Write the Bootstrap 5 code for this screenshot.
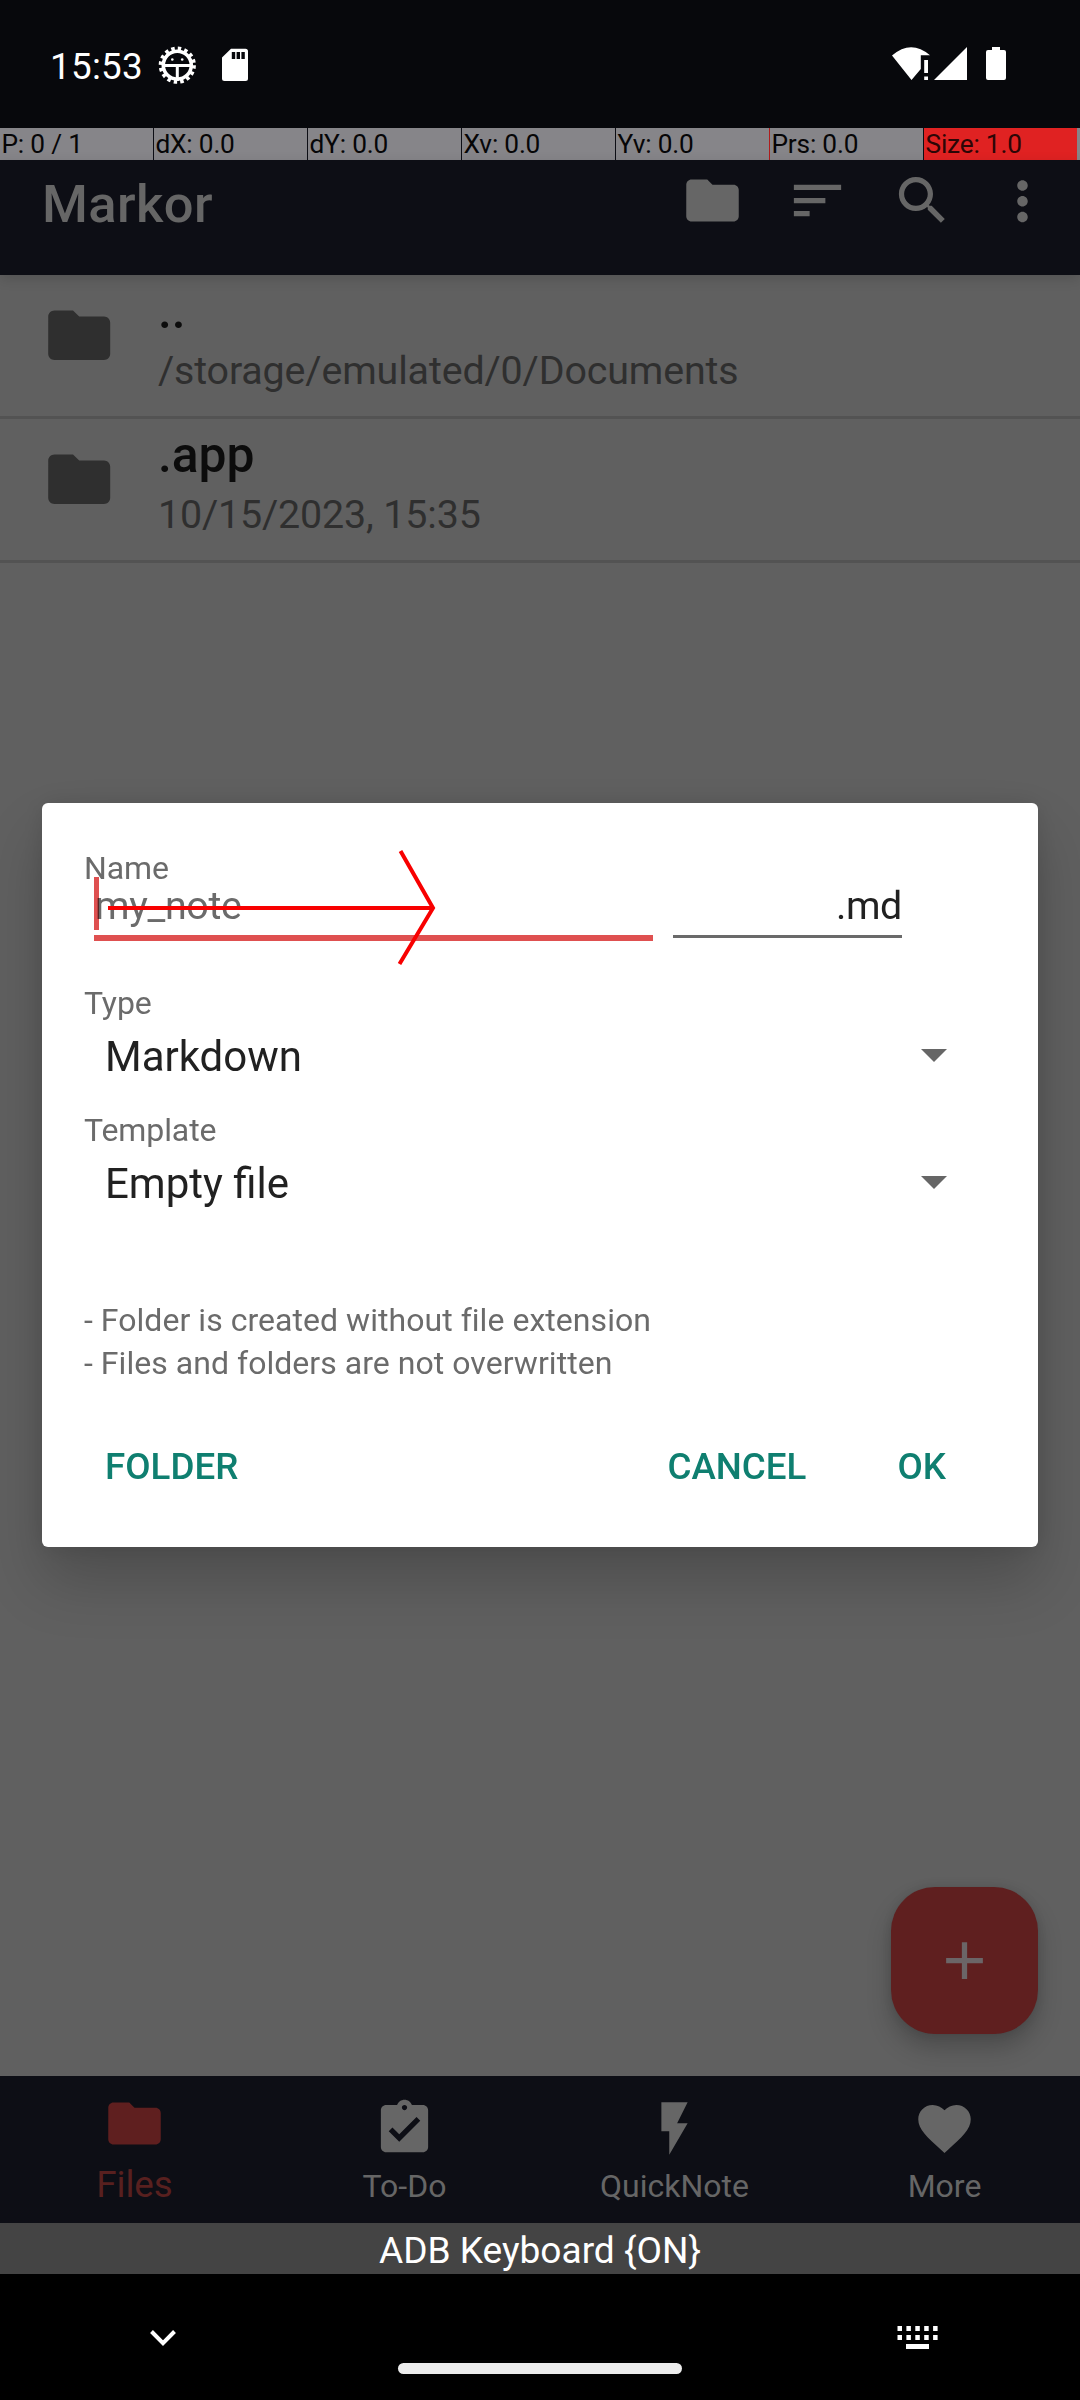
<!DOCTYPE html>
<html lang="en">
<head>
<meta charset="utf-8">
<meta name="viewport" content="width=device-width, initial-scale=1">
<title>Markor</title>
<link href="https://cdn.jsdelivr.net/npm/bootstrap@5.3.0/dist/css/bootstrap.min.css" rel="stylesheet">
<style>
  body { font-family: Roboto, "Liberation Sans", sans-serif; background: #000; }
  svg { display: block; flex: none; }
  .screen { width: 1080px; height: 2400px; overflow: hidden; }
  .statusbar { height: 128px; background: #07080c; padding: 5px 72px 0 50px; }
  .statusbar svg { margin-top: -1px; }
  .clock { font-size: 36.75px; letter-spacing: .3px; width: 107px; }
  .pointer-bar { height: 32px; background: #868589; font-size: 26.25px; letter-spacing: -.2px; line-height: 32px; color: #060607; }
  .pointer-bar div { width: 154px; padding-left: 1.5px; border-right: 1px solid #0d0e15; white-space: nowrap; }
  .pointer-bar .red-edge { border-right-color: #b01c1c; }
  .pointer-bar .hot { width: 153px; background: #e02222; color: #2c0606; border-right: 0; }
  .appbar { height: 115px; background: #0d0e15; color: #666; padding: 0 26px 0 42px; z-index: 1; box-shadow: 0 4px 12px rgba(0,0,0,.14); }
  .appbar-title { font-size: 52.5px; letter-spacing: .4px; line-height: 88px; font-weight: 500; }
  .appbar-icons { padding-top: 9px; gap: 42px; }
  .more-icon { margin-left: -5px; }
  .files { background: #606060; height: 1801px; }
  .file-row { height: 144px; border-bottom: 3px solid #535353; padding-left: 41.5px; }
  .file-icon { margin: 22.6px 42px 0 0; color: #2f2f2f; }
  .file-name { font-size: 49.8px; line-height: 73px; font-weight: 500; color: #0c0c0c; }
  .file-info { font-size: 39.4px; letter-spacing: -.14px; line-height: 46px; color: #2f2f2f; }
  .fab { right: 42px; bottom: 42px; width: 147px; height: 147px; border-radius: 44px; background: #5f1f1f; box-shadow: 0 14px 24px rgba(0,0,0,.22), 0 0 10px rgba(0,0,0,.1); }
  .tabs { height: 147px; background: #0d0e15; color: #666; }
  .tab { width: 270px; font-size: 32px; line-height: 40px; padding: 21px 1px 0 0; }
  .tab-label { margin-top: 6px; }
  .tab.chosen { color: #5f1f1f; font-size: 36.75px; padding-top: 16px; }
  .tab.chosen .tab-label { margin-top: 10px; color: #58201f; }
  .ime { height: 51px; background: #444; color: #fff; font-size: 37.1px; line-height: 55px; }
  .sysnav { height: 126px; background: #000; padding: 50px 141px 0 148px; }
  .handle { width: 284px; height: 11px; border-radius: 6px; background: #ececec; margin: 39px 0 0 4px; }
  .note-dialog { left: 42px; top: 803px; width: 996px; height: 744px; border-radius: 6px; background: #fff; padding: 48px 42px 0 42px; z-index: 2; box-shadow: 0 34px 60px rgba(0,0,0,.2), 0 0 24px rgba(0,0,0,.1); }
  .field-label { font-size: 32px; letter-spacing: -.1px; line-height: 34px; color: #6b6b6b; }
  .inputs { gap: 20px; padding-left: 10px; height: 56px; }
  .input-line { font-size: 39.4px; letter-spacing: -.35px; line-height: 40px; padding: 1px 0 9px; }
  .input-name { width: 559px; border-bottom: 6px solid #df5050; color: #6b6b6b; padding-left: 1px; }
  .input-ext { width: 229px; border-bottom: 3px solid #6a6a6a; color: #212121; }
  .pick { font-size: 42px; line-height: 54px; color: #212121; margin-top: 10px; padding: 0 49px 0 21px; }
  .pick svg { margin-top: 19px; }
  .gap-type { margin-top: 45px; }
  .gap-template { margin-top: 29px; }
  .hints { font-size: 32px; letter-spacing: .04px; line-height: 43px; color: #6b6b6b; margin-top: 88px; }
  .actions { margin-top: 52px; padding: 0 50px 0 21px; font-size: 36.75px; line-height: 60px; font-weight: 500; color: #0f7f70; }
  .cancel { margin-right: 91px; }
  .caret { left: 52px; top: 74px; width: 5px; height: 53px; background: #df5050; mix-blend-mode: multiply; }
  .gesture { left: 60px; top: 40px; }
</style>
</head>
<body>
<svg width="0" height="0" class="position-absolute">
  <symbol id="folder" viewBox="0 0 24 24"><path fill="currentColor" d="M10 4H4c-1.100 0-1.990.9-1.990 2L2 18c0 1.100.9 2 2 2h16c1.100 0 2-.9 2-2V8c0-1.100-.9-2-2-2h-8l-2-2z"/></symbol>
</svg>
<main class="screen position-relative d-flex flex-column">
  <header class="statusbar d-flex align-items-center text-white">
    <div class="clock">15:53</div>
    <svg width="40" height="40" viewBox="157 46 40 40">
      <circle cx="177.300" cy="65.200" r="16.600" fill="none" stroke="#fff" stroke-width="4" stroke-dasharray="3.400 3.119"/>
      <circle cx="177.300" cy="65.200" r="14" fill="none" stroke="#fff" stroke-width="3.600"/>
      <path d="M164 65.500h27M177.300 66v15" stroke="#fff" stroke-width="3"/>
      <circle cx="172.300" cy="59.500" r="1.300" fill="#fff"/><circle cx="182.200" cy="59.500" r="1.300" fill="#fff"/>
    </svg>
    <svg class="ms-4" width="30" height="40" viewBox="221 46 30 40">
      <path fill="#fff" fill-rule="evenodd" d="M231 48.700h14.500q2.500 0 2.500 2.500v27.300q0 2.500-2.500 2.500h-21q-2.500 0-2.500-2.500V57.500zM231.800 52v7h3.400v-7zM236.600 52v7h3.400v-7zM241.400 52v7h3.400v-7z"/>
    </svg>
    <svg class="ms-auto" width="118" height="40" viewBox="890 46 118 40">
      <path fill="#fff" d="M892 55.500Q911 39 930 55.200h-9.200V69L911.500 80z"/>
      <path fill="#fff" d="M924.200 60h3.800v13h-3.800zM924.200 76.500h3.800V80h-3.800z"/>
      <path fill="#fff" d="M934 80 967 47v33z"/>
      <path fill="#fff" d="M992 47h8v3h4q2 0 2 2v26q0 2-2 2h-16q-2 0-2-2V52q0-2 2-2h4z"/>
    </svg>
  </header>
  <div class="pointer-bar d-flex">
    <div>P: 0 / 1</div><div>dX: 0.0</div><div>dY: 0.0</div><div>Xv: 0.0</div><div class="red-edge">Yv: 0.0</div><div>Prs: 0.0</div><div class="hot">Size: 1.0</div>
  </div>
  <nav class="appbar d-flex align-items-start justify-content-between position-relative">
    <div class="appbar-title">Markor</div>
    <div class="appbar-icons d-flex">
      <svg width="63" height="63"><use href="#folder"/></svg>
      <svg width="63" height="63" viewBox="0 0 24 24"><path fill="currentColor" d="M3 18h6v-2H3v2zM3 6v2h18V6H3zm0 7h12v-2H3v2z"/></svg>
      <svg width="63" height="63" viewBox="0 0 24 24"><path fill="currentColor" d="M15.500 14h-.79l-.28-.27C15.410 12.590 16 11.110 16 9.500 16 5.910 13.090 3 9.500 3S3 5.910 3 9.500 5.910 16 9.500 16c1.610 0 3.090-.59 4.230-1.570l.27.28v.79l5 4.990L20.490 19l-4.990-5zm-6 0C7.010 14 5 11.990 5 9.500S7.010 5 9.500 5 14 7.010 14 9.500 11.990 14 9.500 14z"/></svg>
      <svg class="more-icon" width="63" height="63" viewBox="0 -.3 24 24"><path fill="currentColor" d="M12 8c1.100 0 2-.9 2-2s-.9-2-2-2-2 .9-2 2 .9 2 2 2zm0 2c-1.100 0-2 .9-2 2s.9 2 2 2 2-.9 2-2-.9-2-2-2zm0 6c-1.100 0-2 .9-2 2s.9 2 2 2 2-.9 2-2-.9-2-2-2z"/></svg>
    </div>
  </nav>
  <section class="files position-relative">
    <div class="file-row d-flex align-items-start">
      <svg class="file-icon" width="74.400" height="74.400"><use href="#folder"/></svg>
      <div><div class="file-name">..</div><div class="file-info">/storage/emulated/0/Documents</div></div>
    </div>
    <div class="file-row d-flex align-items-start">
      <svg class="file-icon" width="74.400" height="74.400"><use href="#folder"/></svg>
      <div><div class="file-name">.app</div><div class="file-info">10/15/2023, 15:35</div></div>
    </div>
    <div class="fab position-absolute d-flex align-items-center justify-content-center">
      <svg width="63" height="63" viewBox="0 0 24 24"><path fill="#6b6567" d="M19 13h-6v6h-2v-6H5v-2h6V5h2v6h6v2z"/></svg>
    </div>
  </section>
  <nav class="tabs d-flex text-center">
    <div class="tab chosen d-flex flex-column align-items-center"><svg width="63" height="63"><use href="#folder"/></svg><div class="tab-label">Files</div></div>
    <div class="tab d-flex flex-column align-items-center"><svg width="63" height="63" viewBox="0 0 24 24"><path fill="currentColor" d="M19 3h-4.180C14.400 1.840 13.300 1 12 1c-1.300 0-2.400.84-2.820 2H5c-1.100 0-2 .9-2 2v14c0 1.100.9 2 2 2h14c1.100 0 2-.9 2-2V5c0-1.100-.9-2-2-2zm-7 0c.55 0 1 .45 1 1s-.45 1-1 1-1-.45-1-1 .45-1 1-1zm-2 14l-4-4 1.410-1.410L10 14.170l6.590-6.590L18 9l-8 8z"/></svg><div class="tab-label">To-Do</div></div>
    <div class="tab d-flex flex-column align-items-center"><svg width="63" height="63" viewBox="0 0 24 24"><path fill="currentColor" d="M7 2v11h3v9l7-12h-4l4-8z"/></svg><div class="tab-label">QuickNote</div></div>
    <div class="tab d-flex flex-column align-items-center"><svg width="63" height="63" viewBox="0 0 24 24"><path fill="currentColor" d="M12 21.350l-1.450-1.320C5.400 15.360 2 12.280 2 8.500 2 5.420 4.420 3 7.500 3c1.740 0 3.410.81 4.500 2.090C13.090 3.810 14.760 3 16.500 3 19.580 3 22 5.420 22 8.500c0 3.780-3.400 6.860-8.550 11.540L12 21.350z"/></svg><div class="tab-label">More</div></div>
  </nav>
  <div class="ime text-center">ADB Keyboard {ON}</div>
  <footer class="sysnav d-flex justify-content-between align-items-start">
    <svg width="30" height="30" viewBox="148 2324 30 30"><path d="M151.500 2331.500 163 2343.200l11.500-11.700" fill="none" stroke="#fff" stroke-width="4"/></svg>
    <div class="handle"></div>
    <svg width="42" height="30" viewBox="897 2324 42 30" fill="#fff"><path d="M897.500 2326h4.500v5h-4.500zM906.400 2326h4.500v5h-4.500zM915.300 2326h4.500v5h-4.500zM924.200 2326h4.500v5h-4.500zM933.100 2326h4.500v5h-4.500zM897.500 2335h4.500v5h-4.500zM906.400 2335h4.500v5h-4.500zM915.300 2335h4.500v5h-4.500zM924.200 2335h4.500v5h-4.500zM933.100 2335h4.500v5h-4.500zM906 2344h23v5h-23z"/></svg>
  </footer>
  <section class="note-dialog position-absolute">
    <div class="field-label">Name</div>
    <div class="inputs d-flex align-items-start">
      <div class="input-line input-name">my_note</div>
      <div class="input-line input-ext text-end">.md</div>
    </div>
    <div class="field-label gap-type">Type</div>
    <div class="pick d-flex justify-content-between align-items-start">Markdown<svg width="26" height="13"><path d="M0 0h26L13 13z" fill="#666"/></svg></div>
    <div class="field-label gap-template">Template</div>
    <div class="pick d-flex justify-content-between align-items-start">Empty file<svg width="26" height="13"><path d="M0 0h26L13 13z" fill="#666"/></svg></div>
    <div class="hints">- Folder is created without file extension<br>- Files and folders are not overwritten</div>
    <div class="actions d-flex"><span class="me-auto">FOLDER</span><span class="cancel">CANCEL</span><span>OK</span></div>
    <div class="caret position-absolute"></div>
    <svg class="gesture position-absolute" width="340" height="130" viewBox="102 843 340 130"><path d="M108 908H433M400.500 851 433 908 399.500 964" fill="none" stroke="#f80000" stroke-width="4"/></svg>
  </section>
</main>
<script src="https://cdn.jsdelivr.net/npm/bootstrap@5.3.0/dist/js/bootstrap.bundle.min.js"></script>
</body>
</html>
